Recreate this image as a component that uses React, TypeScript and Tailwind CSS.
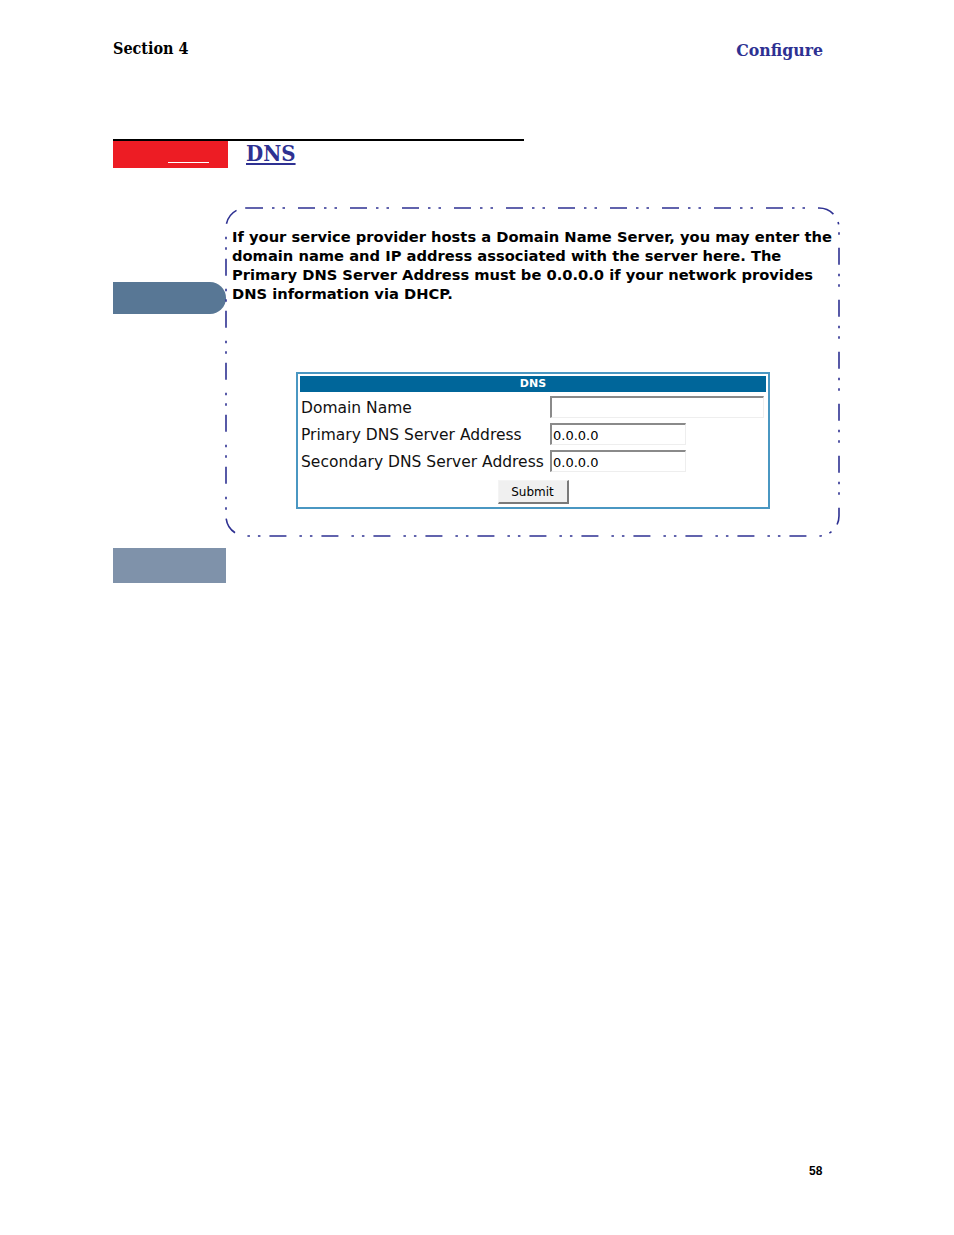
import React from 'react';

const serif = { fontFamily: '"DejaVu Serif", "Liberation Serif", serif', fontStretch: 'condensed' as const };

const DashedFrame: React.FC = () => (
  <svg className="pointer-events-none absolute inset-0" width="616" height="331" aria-hidden>
    <rect
      x="1"
      y="1"
      width="613"
      height="328"
      rx="20"
      ry="20"
      fill="none"
      stroke="#2e3192"
      strokeWidth="1.6"
      strokeDasharray="17 9 2.5 8 2.5 13"
    />
  </svg>
);

interface FieldRowProps {
  label: string;
  value: string;
  wide?: boolean;
}

const FieldRow: React.FC<FieldRowProps> = ({ label, value, wide }) => (
  <div className="flex items-center h-[27px]">
    <span className="w-[250px] pl-[1px] pt-[3px] text-[15.5px] text-[#111]">{label}</span>
    <input
      readOnly
      value={value}
      className={`${wide ? 'w-[214px]' : 'w-[136px]'} h-[22px] border-t-2 border-l-2 border-t-[#8a8a8a] border-l-[#8a8a8a] border-b border-r border-b-[#eeeeee] border-r-[#eeeeee] px-[1px] pt-[1px] text-[13px] text-black outline-none`}
    />
  </div>
);

const DnsForm: React.FC = () => (
  <div
    className="w-[474px] border-2 border-[#4a97c2] p-[2px] pb-[3px] bg-white"
    style={{ fontFamily: '"DejaVu Sans", Verdana, sans-serif' }}
  >
    <div className="h-[16px] bg-[#00669a] text-center text-[11px] font-bold leading-[16px] text-white">DNS</div>
    <div className="pt-[1.5px]">
      <FieldRow label="Domain Name" value="" wide />
      <FieldRow label="Primary DNS Server Address" value="0.0.0.0" />
      <FieldRow label="Secondary DNS Server Address" value="0.0.0.0" />
    </div>
    <div className="flex justify-center pt-[5.5px]">
      <button className="h-[24px] w-[71px] border border-b-2 border-r-2 border-t-[#f4f4f4] border-l-[#f4f4f4] border-b-[#7a7a7a] border-r-[#7a7a7a] bg-[#f0f0f0] text-[12px] text-black">
        Submit
      </button>
    </div>
  </div>
);

export default function App() {
  return (
    <div className="relative h-[1235px] w-[954px] bg-white">
      <div className="flex justify-between pl-[113px] pr-[131px] pt-[37px]" style={serif}>
        <span className="text-[16px] font-bold text-black">Section 4</span>
        <span className="text-[17.5px] font-bold text-[#2e3192]">Configure</span>
      </div>

      <div className="mt-[76px] ml-[113px] w-[411px]">
        <div className="h-[2px] bg-black" />
        <div className="flex items-start">
          <div className="relative h-[27px] w-[115px] bg-[#ed1c24]">
            <div className="absolute left-[55px] top-[21px] h-[1px] w-[41px] bg-white" />
          </div>
          <a className="ml-[18px] text-[22px] leading-[24px] font-bold text-[#2e3192] underline" style={serif}>
            DNS
          </a>
        </div>
      </div>

      <div className="mt-[39px] ml-[113px] flex items-start">
        <div className="w-[112px] pt-[75px]">
          <div className="h-[32px] w-[113px] rounded-r-[16px] bg-[#587795]" />
        </div>
        <div className="relative h-[331px] w-[616px]">
          <DashedFrame />
          <p
            className="pl-[7px] pt-[20px] text-[14.7px] font-bold leading-[19px] text-black"
            style={{ fontFamily: '"DejaVu Sans", Verdana, sans-serif' }}
          >
            If your service provider hosts a Domain Name Server, you may enter the
            <br />
            domain name and IP address associated with the server here. The
            <br />
            Primary DNS Server Address must be 0.0.0.0 if your network provides
            <br />
            DNS information via DHCP.
          </p>
          <div className="ml-[71px] mt-[69px]">
            <DnsForm />
          </div>
        </div>
      </div>

      <div className="ml-[113px] mt-[10px] h-[35px] w-[113px] bg-[#7f92aa]" />

      <div
        className="absolute left-[809px] top-[1162px] text-[12px] font-bold text-black"
        style={{ fontFamily: '"Liberation Sans", Arial, sans-serif' }}
      >
        58
      </div>
    </div>
  );
}
